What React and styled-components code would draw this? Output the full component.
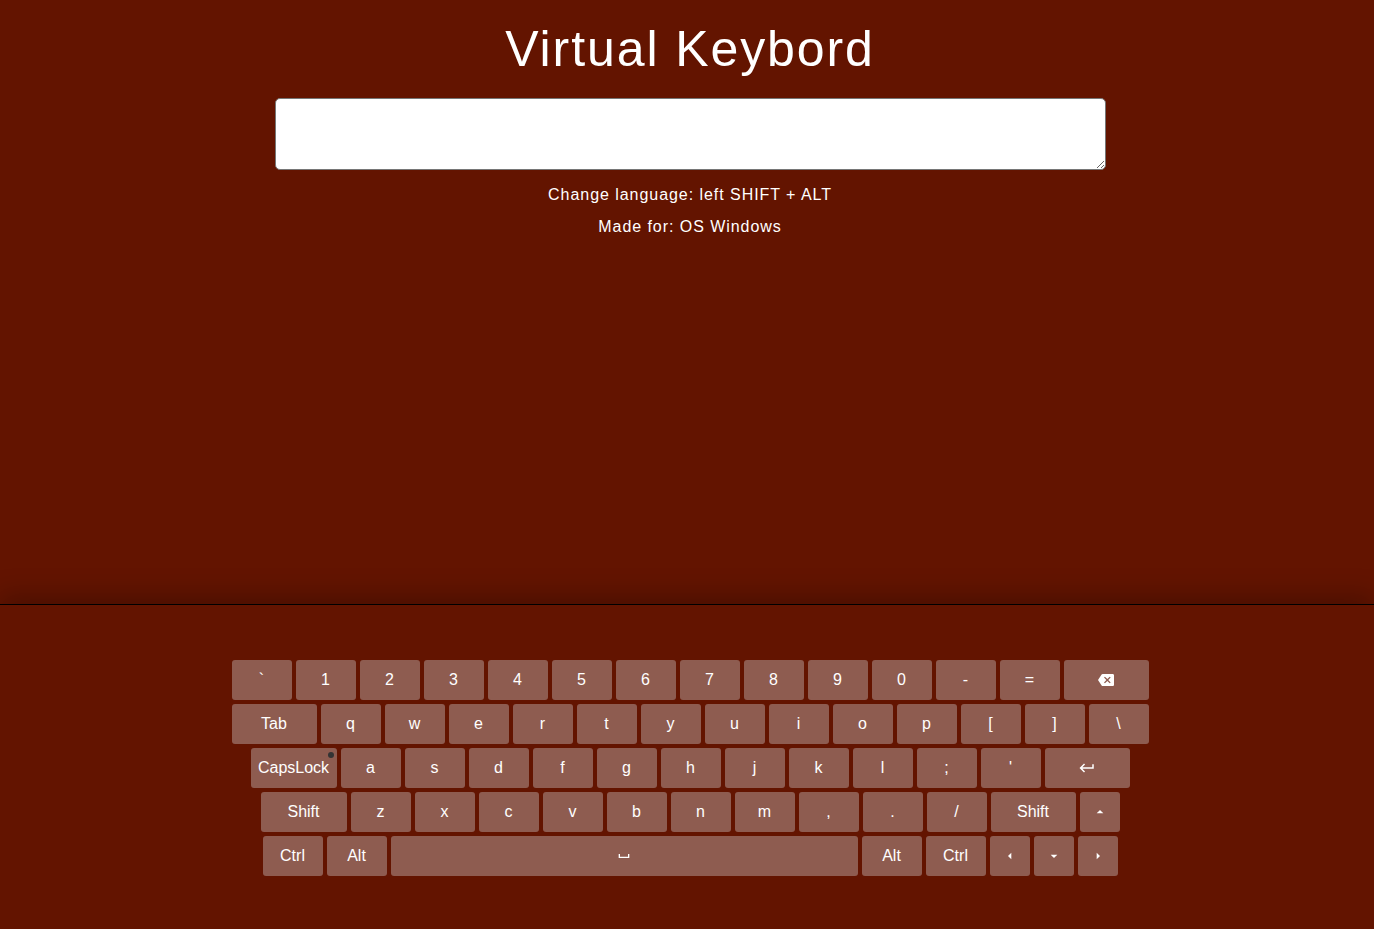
import React from "react";
import styled, { createGlobalStyle } from "styled-components";

const Global = createGlobalStyle`
  html, body { margin: 0; padding: 0; }
  body {
    background: #631400;
    font-family: "Liberation Sans", Arial, sans-serif;
    color: #fff;
    overflow: hidden;
  }
`;

const Page = styled.div`
  min-height: 929px;
  display: flex;
  flex-direction: column;
  align-items: center;
  padding-left: 6px;
  box-sizing: border-box;
`;

const Title = styled.h1`
  margin: 21px 0 0;
  font-size: 50px;
  font-weight: 400;
  letter-spacing: 1.9px;
  line-height: 57px;
`;

const TextArea = styled.textarea`
  margin-top: 20px;
  width: 831px;
  height: 72px;
  box-sizing: border-box;
  border: 1px solid #767676;
  border-radius: 5px;
  background: #fff;
  font-family: "Liberation Sans", Arial, sans-serif;
  font-size: 16px;
  outline: none;
`;

const Note = styled.p`
  margin: ${(p) => (p.$first ? "16px" : "14px")} 0 0;
  font-size: 16px;
  line-height: 18px;
  letter-spacing: 0.95px;
`;

const KeyboardWrap = styled.div`
  margin-top: auto;
  margin-left: -6px;
  align-self: stretch;
  height: 325px;
  box-sizing: border-box;
  border-top: 1px solid #000;
  box-shadow: 0 -8px 25px rgba(0, 0, 0, 0.25);
  padding-top: 53px;
  padding-left: 6px;
  display: flex;
  flex-direction: column;
  align-items: center;
`;

const Row = styled.div`
  display: flex;
  justify-content: center;
`;

const Key = styled.div`
  position: relative;
  width: ${(p) => p.$w || 60}px;
  height: 40px;
  margin: 2px;
  border-radius: 3px;
  background: #8e5c50;
  color: #fff;
  font-size: 16px;
  display: flex;
  align-items: center;
  justify-content: center;
  user-select: none;
  box-sizing: border-box;
`;

const Dot = styled.span`
  position: absolute;
  top: 4px;
  right: 3px;
  width: 6px;
  height: 6px;
  border-radius: 50%;
  background: #333;
`;

const Icon = ({ d, size = 16 }) => (
  <svg width={size} height={size} viewBox="0 0 24 24" fill="#fff">
    <path d={d} />
  </svg>
);

const ICONS = {
  back:
    "M22 3H7c-.69 0-1.23.35-1.59.88L0 12l5.41 8.11c.36.53.9.89 1.59.89h15c1.1 0 2-.9 2-2V5c0-1.1-.9-2-2-2zm-3 12.59L17.59 17 14 13.41 10.41 17 9 15.59 12.59 12 9 8.41 10.41 7 14 10.59 17.59 7 19 8.41 15.41 12 19 15.59z",
  enter: "M19 7v4H5.83l3.58-3.59L8 6l-6 6 6 6 1.41-1.41L5.83 13H21V7z",
  space: "M18 9v4H6V9H4v6h16V9z",
  up: "M7 14l5-5 5 5z",
  down: "M7 10l5 5 5-5z",
  left: "M14 7l-5 5 5 5V7z",
  right: "M10 17l5-5-5-5v10z",
};

const rows = [
  [
    ..."`1234567890-=".split("").map((c) => ({ l: c })),
    { icon: "back", w: 85 },
  ],
  [{ l: "Tab", w: 85 }, ..."qwertyuiop[]\\".split("").map((c) => ({ l: c }))],
  [
    { l: "CapsLock", w: 86, dot: true },
    ..."asdfghjkl;'".split("").map((c) => ({ l: c })),
    { icon: "enter", w: 85, size: 18 },
  ],
  [
    { l: "Shift", w: 86 },
    ..."zxcvbnm,./".split("").map((c) => ({ l: c })),
    { l: "Shift", w: 85 },
    { icon: "up", w: 40 },
  ],
  [
    { l: "Ctrl" },
    { l: "Alt" },
    { icon: "space", w: 467 },
    { l: "Alt" },
    { l: "Ctrl" },
    { icon: "left", w: 40 },
    { icon: "down", w: 40 },
    { icon: "right", w: 40 },
  ],
];

export default function App() {
  return (
    <>
      <Global />
      <Page>
        <Title>Virtual Keybord</Title>
        <TextArea />
        <Note $first>Change language: left SHIFT + ALT</Note>
        <Note>Made for: OS Windows</Note>
        <KeyboardWrap>
          {rows.map((row, i) => (
            <Row key={i}>
              {row.map((k, j) => (
                <Key key={j} $w={k.w}>
                  {k.icon ? <Icon d={ICONS[k.icon]} size={k.size} /> : k.l}
                  {k.dot && <Dot />}
                </Key>
              ))}
            </Row>
          ))}
        </KeyboardWrap>
      </Page>
    </>
  );
}
